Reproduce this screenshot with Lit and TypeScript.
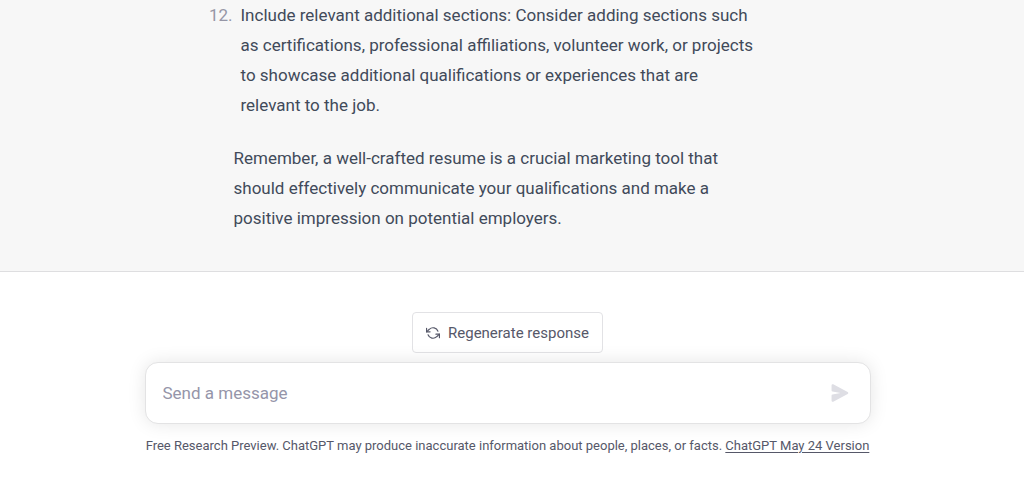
import { LitElement, html, css } from "lit";
import { customElement, state } from "lit/decorators.js";

@customElement("chat-message")
class ChatMessage extends LitElement {
  static styles = css`
    :host {
      display: block;
      background: #f7f7f7;
      border-bottom: 1px solid #dedee0;
      color: #414a5a;
      font-size: 17px;
      line-height: 30px;
    }
    .column {
      box-sizing: border-box;
      max-width: 726px;
      margin: 0 auto;
      padding: 0 112px 38px 89px;
    }
    .tips {
      margin: 0 0 23px;
      padding: 0 0 0 7px;
      list-style: none;
    }
    .tip {
      display: flex;
      gap: 8px;
      margin-left: -36px;
    }
    .number {
      flex: 0 0 28px;
      text-align: right;
      color: #9696a6;
    }
    p {
      margin: 0;
    }
  `;

  render() {
    return html`
      <article class="column">
        <ul class="tips">
          <li class="tip">
            <span class="number">12.</span>
            <span
              >Include relevant additional sections: Consider adding sections such as certifications,
              professional affiliations, volunteer work, or projects to showcase additional
              qualifications or experiences that are relevant to the job.</span
            >
          </li>
        </ul>
        <p>
          Remember, a well-crafted resume is a crucial marketing tool that should effectively
          communicate your qualifications and make a positive impression on potential employers.
        </p>
      </article>
    `;
  }
}

@customElement("chat-composer")
class ChatComposer extends LitElement {
  @state() private draft = "";

  static styles = css`
    :host {
      display: flex;
      flex-direction: column;
      align-items: center;
      padding: 40px 16px 22px;
      color: #565869;
    }
    button {
      font: inherit;
      color: inherit;
      cursor: pointer;
    }
    .regenerate {
      display: flex;
      align-items: center;
      gap: 8px;
      height: 41px;
      padding: 0 13px;
      background: #fff;
      border: 1px solid #e2e2e5;
      border-radius: 4px;
      font-size: 15px;
    }
    .refresh {
      width: 14px;
      height: 14px;
      fill: none;
      stroke: currentColor;
      stroke-width: 2;
      stroke-linecap: round;
      stroke-linejoin: round;
    }
    .box {
      box-sizing: border-box;
      display: flex;
      align-items: center;
      width: 100%;
      max-width: 726px;
      height: 62px;
      margin: 9px 0 12px;
      padding: 0 21px 0 17px;
      background: #fff;
      border: 1px solid #e3e3e4;
      border-radius: 13px;
      box-shadow: 0 0 18px rgba(0, 0, 0, 0.1);
    }
    .field {
      flex: 1;
      min-width: 0;
      padding: 0;
      border: 0;
      outline: 0;
      background: none;
      color: #343541;
      font: inherit;
      font-size: 17px;
      line-height: 26px;
    }
    .field::placeholder {
      color: #9595a9;
      opacity: 1;
    }
    .send {
      display: flex;
      padding: 0;
      border: 0;
      background: none;
      color: #dedee4;
    }
    .send svg {
      width: 18px;
      height: 18px;
      fill: currentColor;
    }
    .note {
      margin: 0;
      font-size: 13px;
      line-height: 20px;
      text-align: center;
    }
    a {
      color: inherit;
      text-underline-offset: 2px;
    }
  `;

  private onInput(event: Event) {
    this.draft = (event.target as HTMLInputElement).value;
  }

  render() {
    return html`
      <button class="regenerate" type="button">
        <svg class="refresh" viewBox="0 0 24 24" aria-hidden="true">
          <polyline points="1 4 1 10 7 10"></polyline>
          <polyline points="23 20 23 14 17 14"></polyline>
          <path d="M20.49 9A9 9 0 0 0 5.64 5.64L1 10m22 4l-4.64 4.36A9 9 0 0 1 3.51 15"></path>
        </svg>
        Regenerate response
      </button>
      <form class="box" @submit=${(event: Event) => event.preventDefault()}>
        <input
          class="field"
          type="text"
          aria-label="Message"
          placeholder="Send a message"
          .value=${this.draft}
          @input=${this.onInput}
        />
        <button class="send" type="submit" aria-label="Send">
          <svg viewBox="0 0 16 16" aria-hidden="true">
            <path
              d="M.5 1.163A1 1 0 0 1 1.97.28l12.868 6.837a1 1 0 0 1 0 1.766L1.969 15.72A1 1 0 0 1 .5 14.836V10.33a1 1 0 0 1 .816-.983L8.5 8 1.316 6.653A1 1 0 0 1 .5 5.67V1.163Z"
            ></path>
          </svg>
        </button>
      </form>
      <p class="note">
        Free Research Preview. ChatGPT may produce inaccurate information about people, places, or
        facts. <a href="#release-notes">ChatGPT May 24 Version</a>
      </p>
    `;
  }
}

@customElement("app-root")
class AppRoot extends LitElement {
  static styles = css`
    :host {
      display: block;
      min-height: 100vh;
      background: #fff;
      font-family: Roboto, "Liberation Sans", Arial, sans-serif;
    }
    .message {
      padding-right: 9px;
    }
    .composer {
      padding-right: 25px;
    }
  `;

  render() {
    return html`
      <main>
        <chat-message class="message"></chat-message>
        <chat-composer class="composer"></chat-composer>
      </main>
    `;
  }
}
